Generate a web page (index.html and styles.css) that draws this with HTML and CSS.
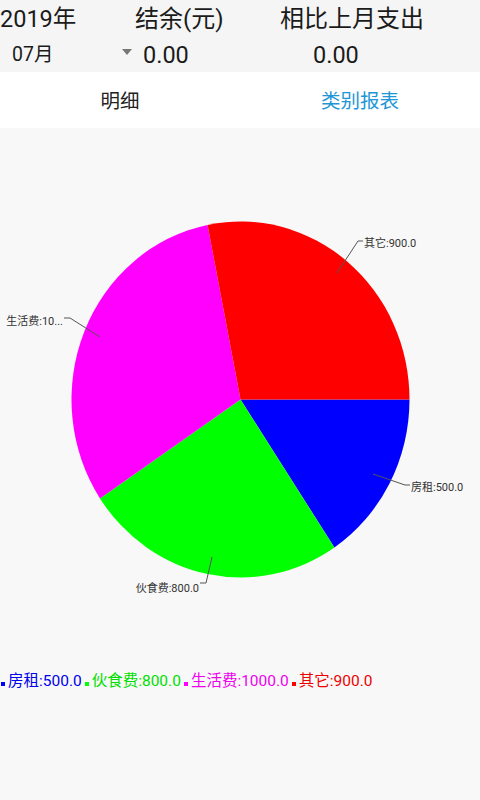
FILE: index.html
```html
<!DOCTYPE html>
<html lang="zh">
<head>
<meta charset="utf-8">
<title>类别报表</title>
<link rel="stylesheet" href="styles.css">
</head>
<body>
<div class="screen">
  <header class="summary">
    <div class="year">2019年</div>
    <div class="label balance-label">结余(元)</div>
    <div class="label compare-label">相比上月支出</div>
    <div class="month-spinner"><span class="month">07月</span><span class="caret"></span></div>
    <div class="value balance-value">0.00</div>
    <div class="value compare-value">0.00</div>
  </header>
  <nav class="tabs">
    <div class="tab">明细</div>
    <div class="tab active">类别报表</div>
  </nav>
  <main class="chart-area">
    <svg class="pie" width="480" height="530" viewBox="0 128 480 530">
      <path fill="#0000ff" d="M240.5 399.5 L409.5 399.5 A169 178 0 0 1 334.39 547.5 Z"/>
      <path fill="#00ff00" d="M240.5 399.5 L334.39 547.5 A169 178 0 0 1 99.98 498.39 Z"/>
      <path fill="#ff00ff" d="M240.5 399.5 L99.98 498.39 A169 178 0 0 1 207.53 224.92 Z"/>
      <path fill="#ff0000" d="M240.5 399.5 L207.53 224.92 A169 178 0 0 1 409.5 399.5 Z"/>
      <g class="leader" fill="none" stroke="#555" stroke-width="1">
        <polyline points="337,273 358,241 363,241"/>
        <polyline points="100,337 70,318 64,318"/>
        <polyline points="373,474 405,485 410,485"/>
        <polyline points="212,557 206,583 200,583"/>
      </g>
      <g class="slice-label">
        <text x="364" y="247">其它:900.0</text>
        <text x="63" y="325" text-anchor="end">生活费:10...</text>
        <text x="411" y="491">房租:500.0</text>
        <text x="199" y="592" text-anchor="end">伙食费:800.0</text>
      </g>
    </svg>
    <div class="legend">
      <div class="legend-item rent"><span class="swatch"></span>房租:500.0</div>
      <div class="legend-item food"><span class="swatch"></span>伙食费:800.0</div>
      <div class="legend-item living"><span class="swatch"></span>生活费:1000.0</div>
      <div class="legend-item other"><span class="swatch"></span>其它:900.0</div>
    </div>
  </main>
</div>
</body>
</html>
```
FILE: styles.css
```css
html, body {
  margin: 0;
  padding: 0;
}
body {
  font-family: Roboto, "Noto Sans CJK SC", sans-serif;
  color: #222;
  background: #f8f8f8;
}
.screen {
  width: 480px;
  height: 800px;
  overflow: hidden;
  display: flex;
  flex-direction: column;
}
.summary {
  height: 72px;
  background: #f5f5f5;
  display: grid;
  grid-template-columns: 135px 145px 1fr;
  grid-template-rows: 38px 34px;
  align-items: center;
  color: #1b1b1b;
}
.year, .label {
  font-size: 24px;
  line-height: 38px;
}
.year {
  font-size: 23.5px;
}
.month-spinner {
  display: flex;
  align-items: center;
  justify-content: space-between;
  padding-left: 12px;
  padding-right: 3px;
}
.month {
  font-size: 19.5px;
  line-height: 34px;
}
.caret {
  width: 0;
  height: 0;
  border-left: 5px solid transparent;
  border-right: 5px solid transparent;
  border-top: 6px solid #777;
  margin-top: -6px;
}
.value {
  font-size: 23.5px;
  line-height: 34px;
}
.balance-value {
  padding-left: 8px;
}
.compare-value {
  padding-left: 33px;
}
.tabs {
  height: 56px;
  background: #ffffff;
  display: flex;
}
.tab {
  flex: 1;
  display: flex;
  align-items: center;
  justify-content: center;
  font-size: 19.5px;
  color: #222;
  padding-bottom: 2px;
}
.tab.active {
  color: #2196d6;
}
.chart-area {
  flex: 1;
  background: #f8f8f8;
  display: flex;
  flex-direction: column;
}
.pie {
  display: block;
}
.slice-label text {
  font-size: 11px;
  fill: #333;
}
.legend {
  display: flex;
  gap: 3px;
  padding-left: 1px;
  margin-top: 13px;
  font-size: 15.5px;
  line-height: 20px;
}
.legend-item {
  display: flex;
  align-items: center;
}
.swatch {
  width: 4px;
  height: 4px;
  margin-right: 3px;
  margin-top: 5px;
}
.rent { color: #0000ee; }
.rent .swatch { background: #0000ff; }
.food { color: #00e000; }
.food .swatch { background: #00ff00; }
.living { color: #ee00ee; }
.living .swatch { background: #ff00ff; }
.other { color: #ee0000; }
.other .swatch { background: #ff0000; }
```
